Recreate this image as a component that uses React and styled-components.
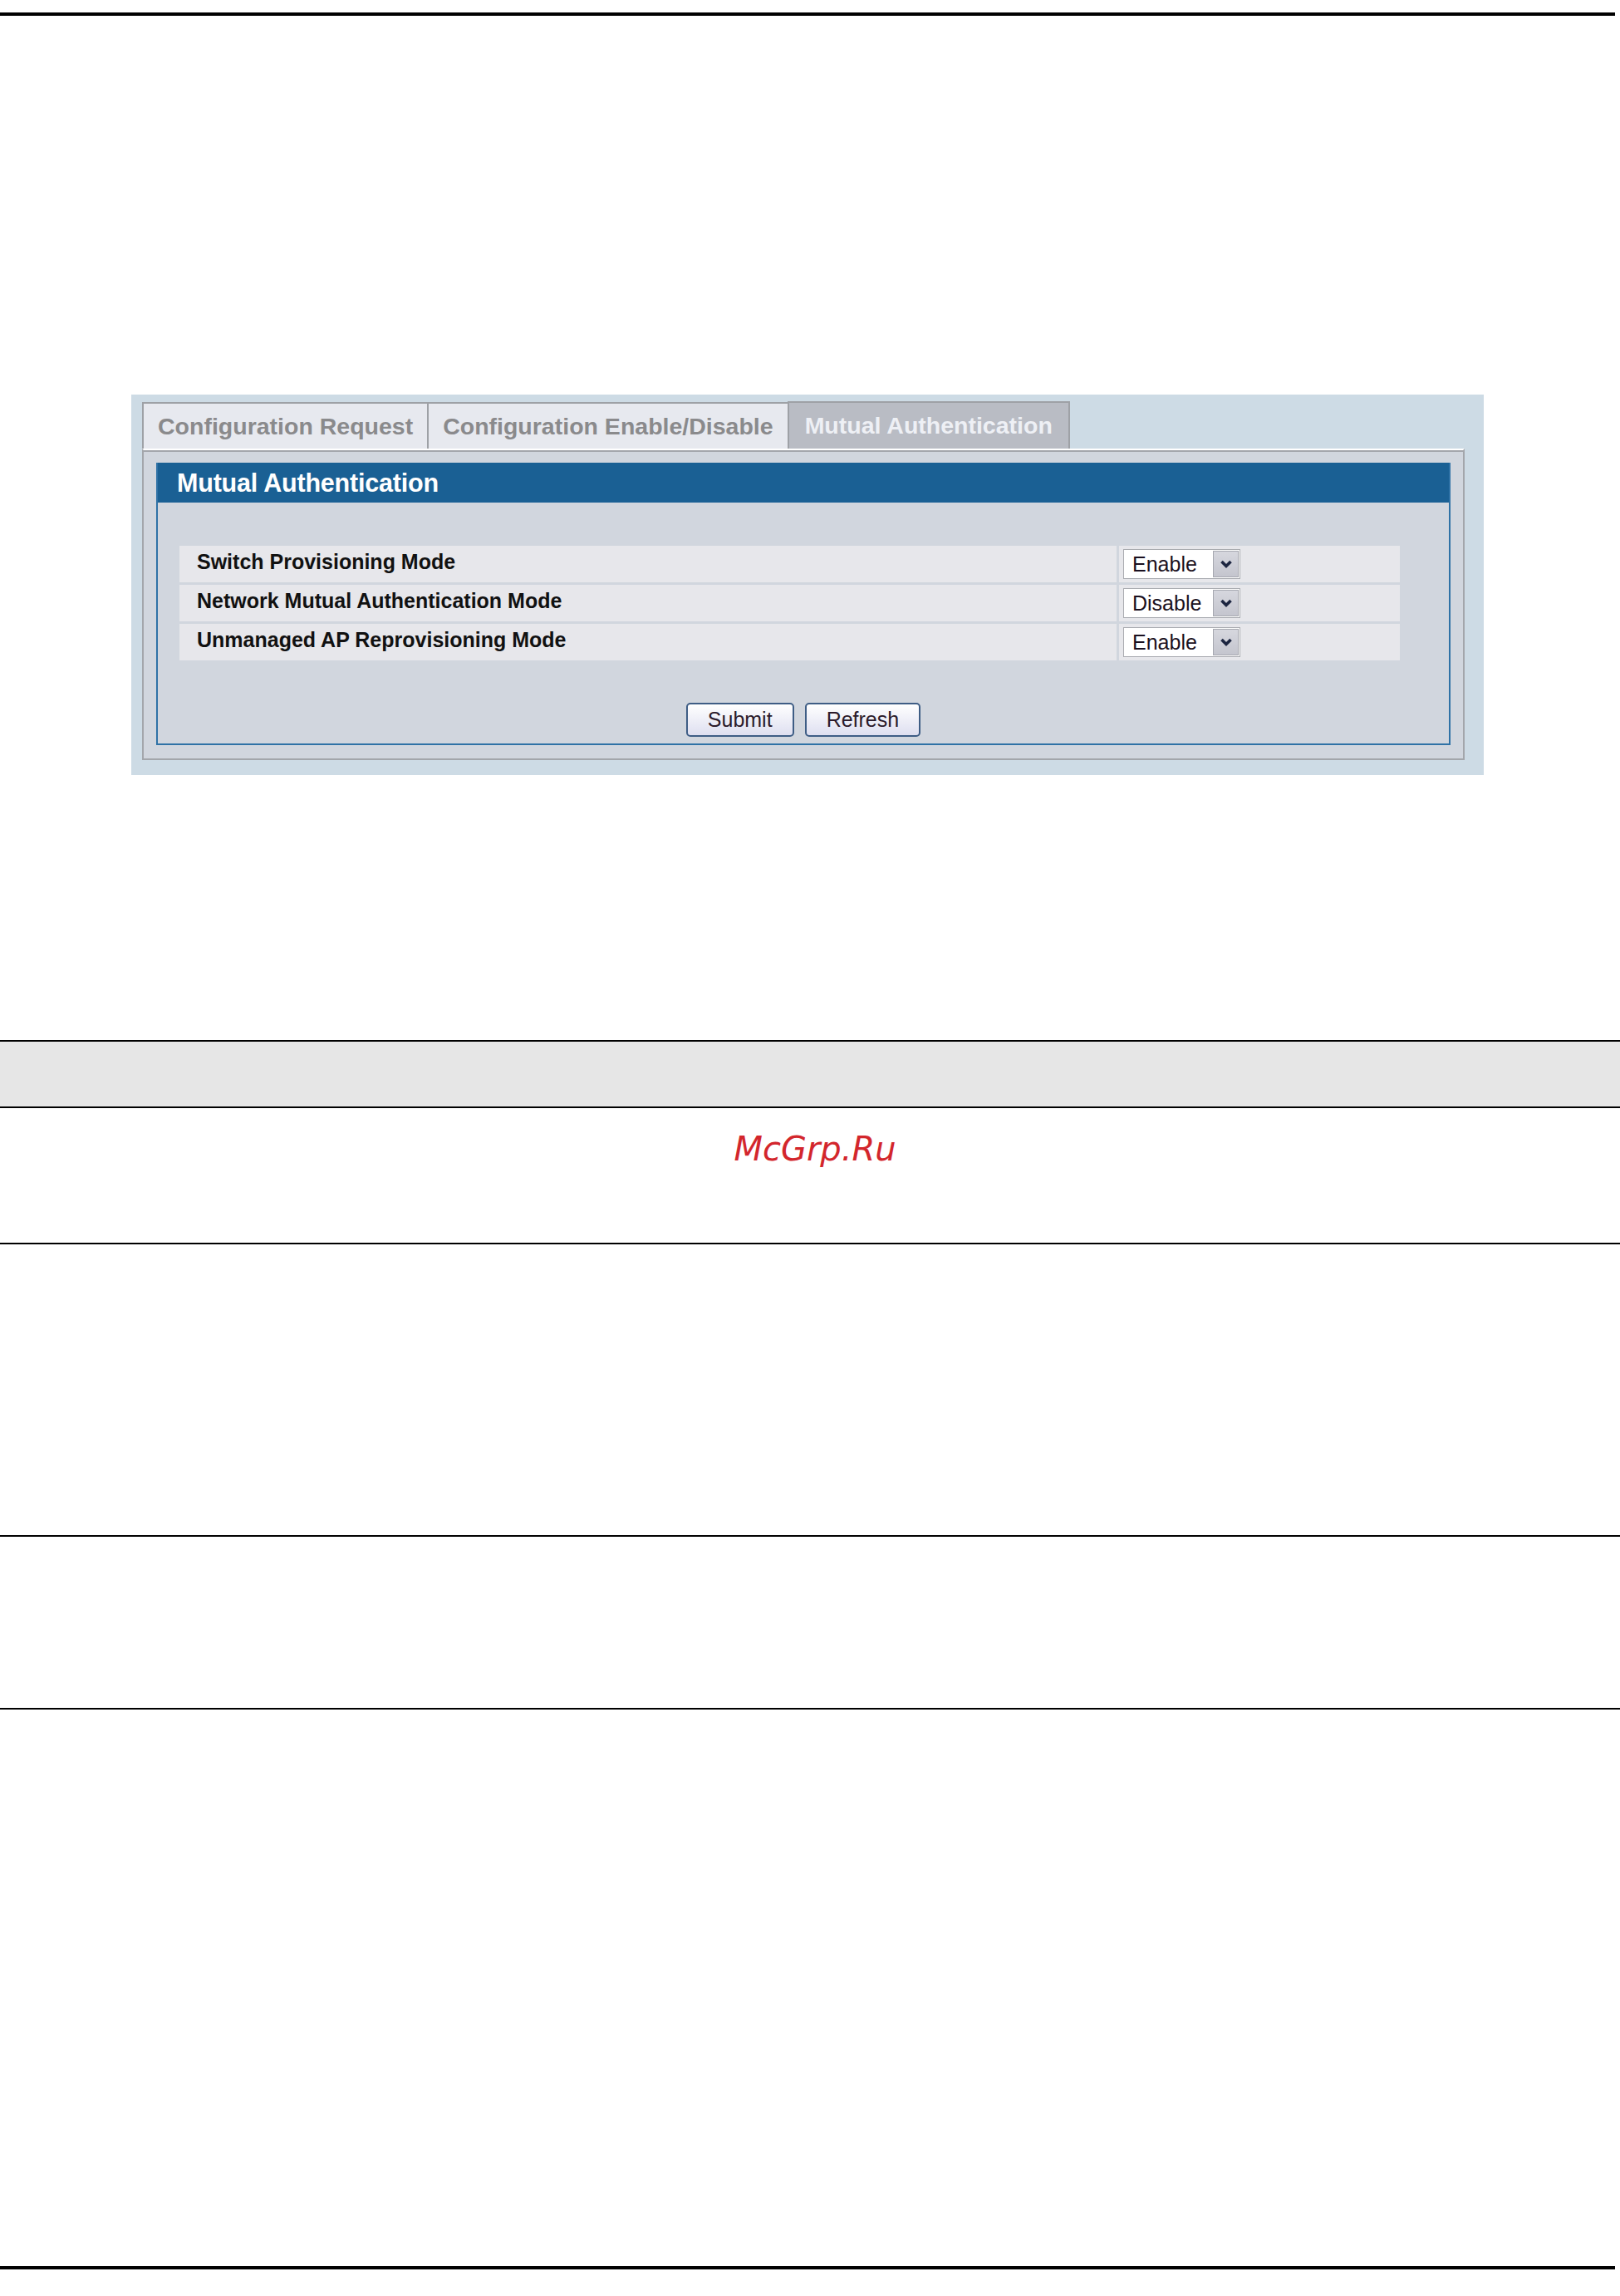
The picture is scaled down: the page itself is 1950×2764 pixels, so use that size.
import { Fragment } from "react";
import styled, { createGlobalStyle } from "styled-components";

const GlobalStyle = createGlobalStyle`
  body {
    margin: 0;
    background: #fff;
    font-family: "Liberation Sans", Arial, sans-serif;
  }
`;

const Page = styled.div`
  width: 1950px;
  padding-bottom: 30px;
`;

const Rule = styled.div`
  width: 1944px;
  height: ${(p) => p.$thick}px;
  background: #000;
  margin-top: ${(p) => p.$top}px;
`;

const Panel = styled.div`
  box-sizing: border-box;
  width: 1628px;
  margin: 456px 0 0 158px;
  padding: 8px 23px 18px 13px;
  background: #cddbe5;
`;

const TabBar = styled.div`
  display: flex;
  align-items: flex-end;
  height: 57px;
`;

const Tab = styled.div`
  box-sizing: border-box;
  height: ${(p) => (p.$active ? 57 : 56)}px;
  display: flex;
  align-items: center;
  padding: 0 ${(p) => (p.$active ? 19 : 17)}px;
  border: 2px solid #9ea1a6;
  border-bottom: none;
  margin-left: ${(p) => (p.$first ? 0 : -2)}px;
  background: ${(p) => (p.$active ? "#b9bcc4" : "#e7e9ef")};
  color: ${(p) => (p.$active ? "#eef0f5" : "#8a8a8c")};
  font-size: 28.5px;
  font-weight: bold;
  white-space: nowrap;
`;

const TabBody = styled.div`
  border: 2px solid #a3a6ab;
  border-top: 2px solid #fff;
  box-shadow: inset 0 2px 0 #a3a6ab;
  background: #d1d6de;
  padding: 15px 15px 16px;
`;

const FormBox = styled.div`
  border: 2px solid #2f72a6;
  border-top: none;
  background: #d1d6de;
`;

const FormHeader = styled.div`
  height: 48px;
  display: flex;
  align-items: center;
  padding-left: 23px;
  background: #1a6094;
  color: #fff;
  font-size: 30.5px;
  font-weight: bold;
  letter-spacing: -0.2px;
`;

const FormBody = styled.div`
  padding: 52px 0 8px;
`;

const RowGrid = styled.div`
  display: grid;
  grid-template-columns: 1128px 1fr;
  grid-auto-rows: 44px;
  gap: 3px;
  margin: 0 59px 0 26px;
`;

const LabelCell = styled.div`
  display: flex;
  align-items: center;
  padding: 0 0 5px 21px;
  background: #e7e7eb;
  color: #111;
  font-size: 25px;
  font-weight: bold;
`;

const ValueCell = styled.div`
  display: flex;
  align-items: center;
  padding-left: 5px;
  background: #e7e7eb;
`;

const SelectBox = styled.div`
  box-sizing: border-box;
  width: 141px;
  height: 36px;
  display: flex;
  border: 1px solid #a9abb0;
  background: #fff;
`;

const SelectValue = styled.div`
  flex: 1;
  padding-left: 10px;
  line-height: 34px;
  font-size: 25px;
  color: #1a1020;
  overflow: hidden;
  white-space: nowrap;
`;

const SelectArrow = styled.div`
  box-sizing: border-box;
  width: 31px;
  margin: 1px;
  display: flex;
  align-items: center;
  justify-content: center;
  background: linear-gradient(#d6d7de, #c4c5ce);
  border: 1px solid #a6a8b0;
`;

const ButtonRow = styled.div`
  display: flex;
  justify-content: center;
  gap: 13px;
  margin-top: 51px;
`;

const Button = styled.button`
  height: 41px;
  padding: 0 24px;
  border: 2px solid #3e5d85;
  border-radius: 5px;
  background: linear-gradient(#ffffff, #dedff0);
  color: #2b1b2b;
  font-family: "Liberation Sans", Arial, sans-serif;
  font-size: 25px;
`;

const DocTable = styled.div`
  margin-top: 319px;
  border-top: 2px solid #000;
`;

const DocRow = styled.div`
  height: ${(p) => p.$h}px;
  border-bottom: 2px solid #000;
  background: ${(p) => (p.$head ? "#e6e6e6" : "#fff")};
`;

const Watermark = styled.div`
  padding: 25px 0 0 12px;
  text-align: center;
  font-family: "DejaVu Sans", sans-serif;
  font-style: italic;
  font-size: 40px;
  line-height: 48px;
  color: #d3262c;
`;

const rows = [
  { label: "Switch Provisioning Mode", value: "Enable" },
  { label: "Network Mutual Authentication Mode", value: "Disable" },
  { label: "Unmanaged AP Reprovisioning Mode", value: "Enable" },
];

function Chevron() {
  return (
    <svg width="16" height="12" viewBox="0 0 16 12">
      <polyline
        points="2.5,3 8,8.5 13.5,3"
        fill="none"
        stroke="#1c2540"
        strokeWidth="3.6"
      />
    </svg>
  );
}

export default function App() {
  return (
    <Page>
      <GlobalStyle />
      <Rule $thick={4} $top={15} />

      <Panel>
        <TabBar>
          <Tab $first>Configuration Request</Tab>
          <Tab>Configuration Enable/Disable</Tab>
          <Tab $active>Mutual Authentication</Tab>
        </TabBar>
        <TabBody>
          <FormBox>
            <FormHeader>Mutual Authentication</FormHeader>
            <FormBody>
              <RowGrid>
                {rows.map((r) => (
                  <Fragment key={r.label}>
                    <LabelCell>{r.label}</LabelCell>
                    <ValueCell>
                      <SelectBox>
                        <SelectValue>{r.value}</SelectValue>
                        <SelectArrow>
                          <Chevron />
                        </SelectArrow>
                      </SelectBox>
                    </ValueCell>
                  </Fragment>
                ))}
              </RowGrid>
              <ButtonRow>
                <Button>Submit</Button>
                <Button>Refresh</Button>
              </ButtonRow>
            </FormBody>
          </FormBox>
        </TabBody>
      </Panel>

      <DocTable>
        <DocRow $head $h={78} />
        <DocRow $h={162}>
          <Watermark>McGrp.Ru</Watermark>
        </DocRow>
        <DocRow $h={350} />
        <DocRow $h={206} />
      </DocTable>

      <Rule $thick={4} $top={670} />
    </Page>
  );
}
